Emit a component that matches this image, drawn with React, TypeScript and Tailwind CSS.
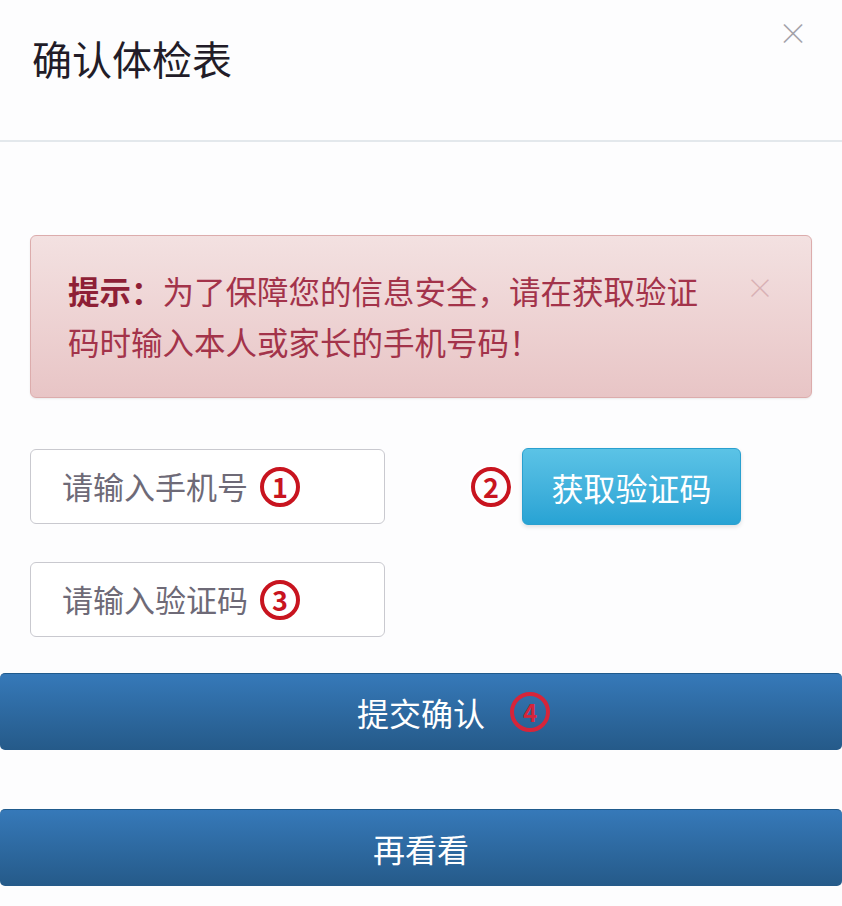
import React from "react";

const font = "font-['Noto_Sans_CJK_SC','Noto_Sans',sans-serif]";

const Mark = ({ n }: { n: string }) => (
  <span className="inline-flex h-[40px] w-[40px] shrink-0 items-center justify-center rounded-full border-[4px] border-[#c8141f] text-[27px] font-bold leading-none text-[#c8141f] shadow-[0_0_3px_2px_#ffffff]">
    {n}
  </span>
);

const App = () => {
  return (
    <div className={`w-[842px] h-[906px] bg-[#fdfdfe] ${font}`}>
      <div className="flex h-[142px] items-start justify-between border-b-2 border-[#e3e8ec] pl-[32px] pr-[34px]">
        <h1 className="pt-[33px] text-[40px] font-normal leading-[50px] text-[#221c28]">
          确认体检表
        </h1>
        <button className="pt-[16px] text-[30px] font-light leading-[30px] text-[#a2a2a8]">
          ×
        </button>
      </div>

      <div className="mx-[30px] mt-[93px] flex h-[163px] items-start justify-between rounded-[6px] border border-[#dcacac] bg-gradient-to-b from-[#f3e1e1] to-[#e8c5c6] pl-[37px] pr-[37px] pt-[29px] shadow-[0_1px_2px_rgba(0,0,0,0.08)]">
        <p className="w-[650px] text-[31.5px] leading-[51px] text-[#a3334a]">
          <b className="font-bold text-[#8e1f36]">提示：</b>为了保障您的信息安全，请在获取验证码时输入本人或家长的手机号码！
        </p>
        <span className="pt-[8px] text-[28px] font-light leading-[28px] text-[#d8b0b4]">×</span>
      </div>

      <div className="mt-[50px] flex items-center pl-[30px]">
        <div className="flex h-[75px] w-[355px] items-center gap-[12px] rounded-[6px] border border-[#c9c9cf] bg-white pl-[31px]">
          <span className="text-[31px] text-[#6e6a77]">请输入手机号</span>
          <Mark n="1" />
        </div>
        <div className="ml-[86px] flex items-center gap-[11px]">
          <Mark n="2" />
          <button className="h-[77px] w-[219px] rounded-[6px] border border-[#2aa0cf] bg-gradient-to-b from-[#5bc3e6] to-[#27a3d4] text-[32px] text-white shadow-[0_2px_4px_rgba(0,0,0,0.12)]">
            获取验证码
          </button>
        </div>
      </div>

      <div className="mt-[37px] pl-[30px]">
        <div className="flex h-[75px] w-[355px] items-center gap-[12px] rounded-[6px] border border-[#c9c9cf] bg-white pl-[31px]">
          <span className="text-[31px] text-[#6e6a77]">请输入验证码</span>
          <Mark n="3" />
        </div>
      </div>

      <button className="mt-[36px] flex h-[77px] w-full items-center justify-center rounded-[5px] border-t border-[#1f5a8c] bg-gradient-to-b from-[#3679b9] to-[#255a89] text-[32px] text-white">
        <span className="relative">
          提交确认
          <span className="absolute left-[calc(100%+25px)] top-1/2 inline-flex h-[40px] w-[40px] -translate-y-1/2 items-center justify-center rounded-full border-[4px] border-[#d6253a] text-[24px] font-bold leading-none text-[#d6253a]">
            4
          </span>
        </span>
      </button>

      <button className="mt-[59px] flex h-[77px] w-full items-center justify-center rounded-[5px] border-t border-[#1f5a8c] bg-gradient-to-b from-[#3679b9] to-[#255a89] text-[32px] text-white">
        再看看
      </button>
    </div>
  );
};

export default App;
